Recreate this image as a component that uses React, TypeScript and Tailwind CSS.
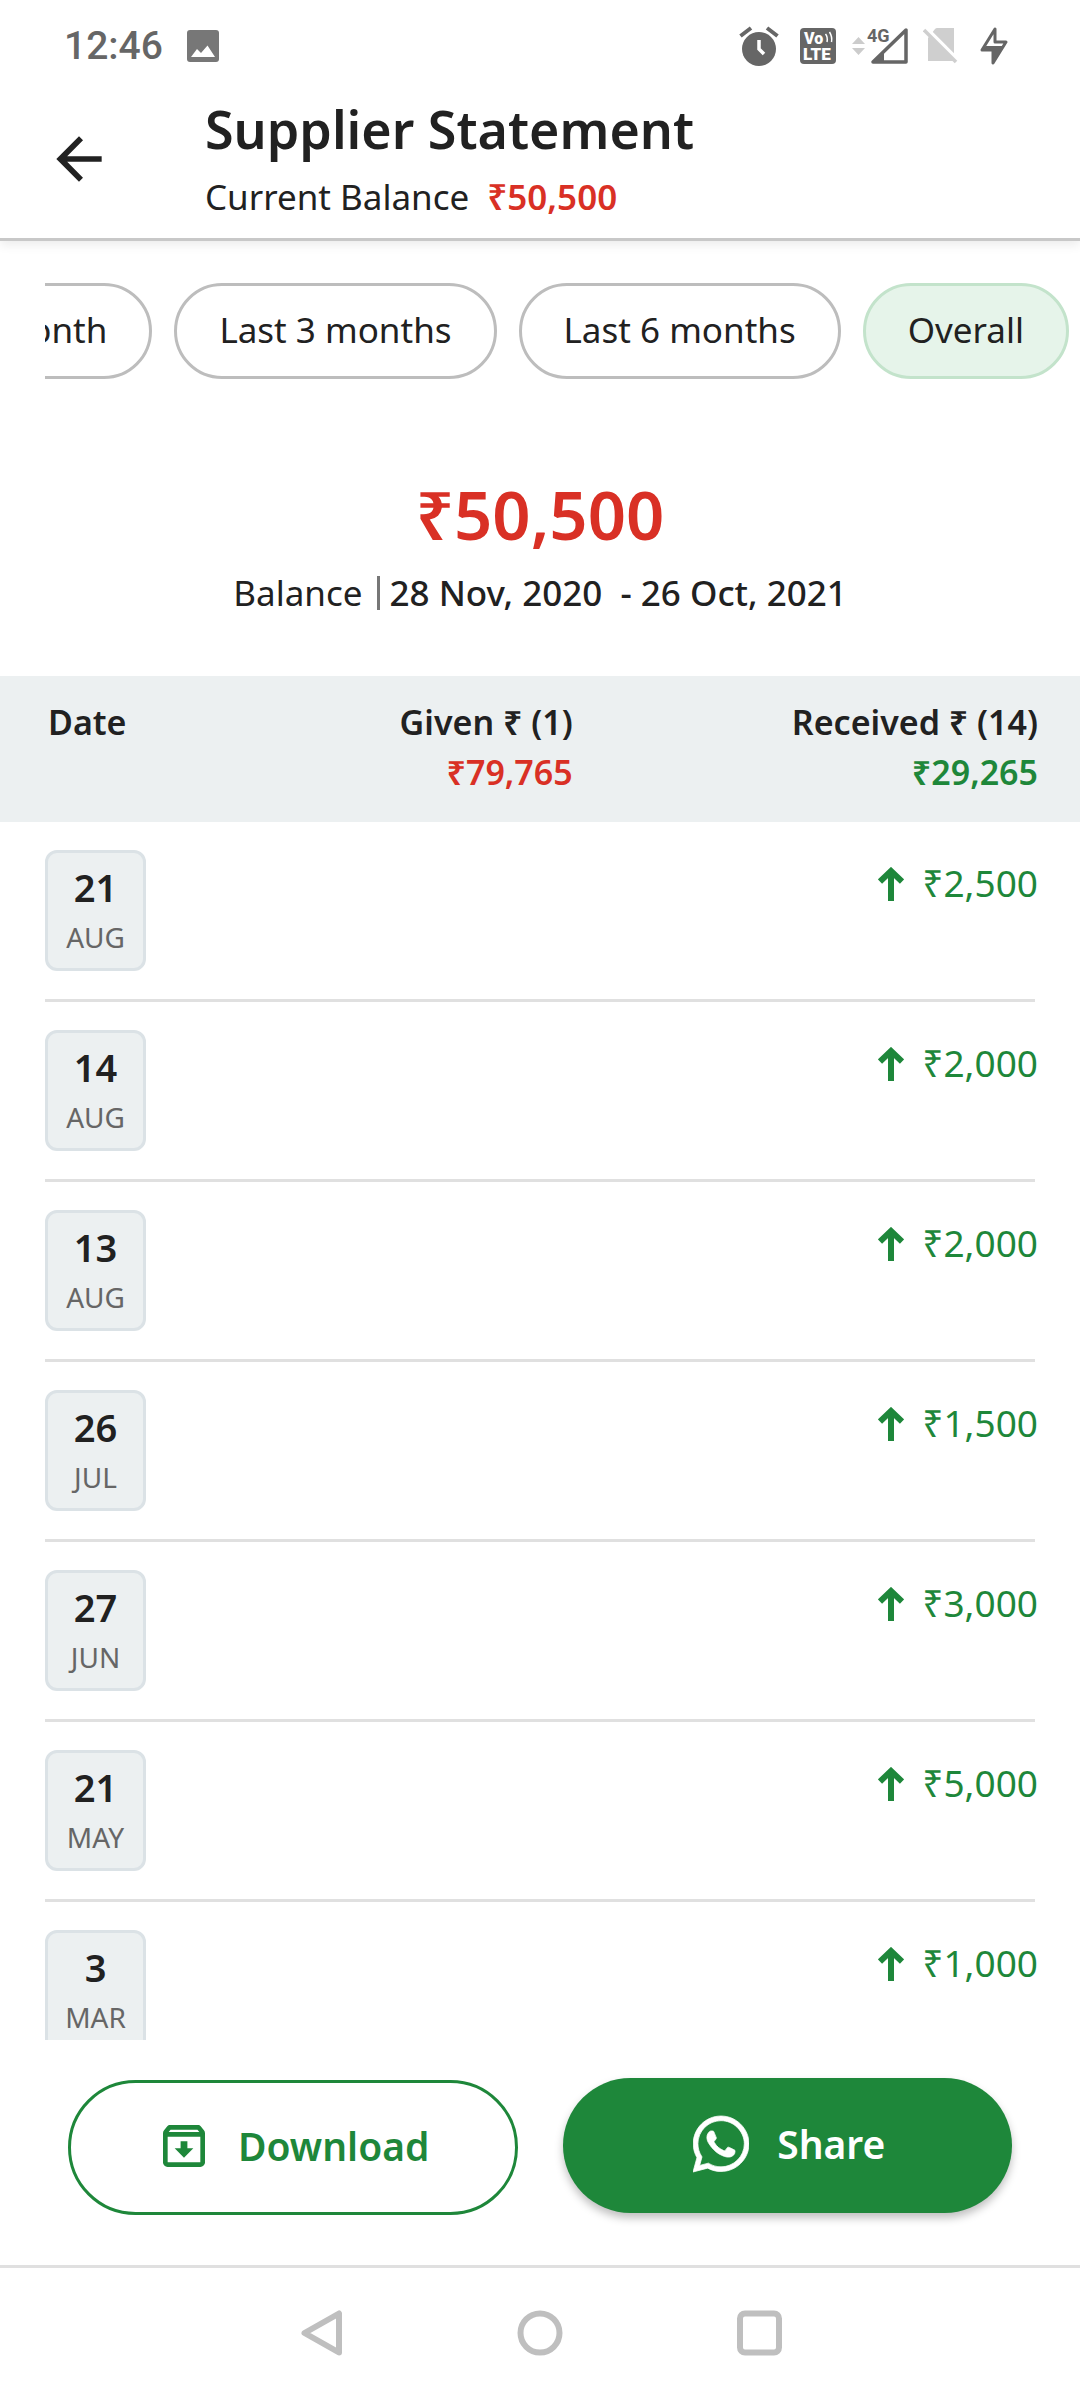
import { useState } from "react"
import { FaWhatsapp } from "react-icons/fa"
import { MdArrowBack, MdOutlineArchive } from "react-icons/md"

type Entry = {
  day: string
  month: string
  received: string
}

const entries: Entry[] = [
  { day: "21", month: "AUG", received: "₹2,500" },
  { day: "14", month: "AUG", received: "₹2,000" },
  { day: "13", month: "AUG", received: "₹2,000" },
  { day: "26", month: "JUL", received: "₹1,500" },
  { day: "27", month: "JUN", received: "₹3,000" },
  { day: "21", month: "MAY", received: "₹5,000" },
  { day: "3", month: "MAR", received: "₹1,000" },
]

const ranges = ["Last month", "Last 3 months", "Last 6 months", "Overall"]

function StatusBar() {
  return (
    <div className="flex items-center justify-between h-[92px] pl-[64px] pr-[72px] text-[#666]">
      <div className="flex items-center gap-6">
        <span className="font-['Roboto',sans-serif] font-medium text-[39px] leading-[48px]">12:46</span>
        <svg className="w-8 h-8" viewBox="0 0 32 32" aria-hidden="true">
          <rect width="32" height="32" rx="3" fill="#777" />
          <path d="M4 27l6-8 4 4 6.500-7.500L28 27z" fill="#fff" />
        </svg>
      </div>
      <div className="flex items-center">
        <svg className="w-10 h-10" viewBox="0 0 40 40" aria-hidden="true">
          <circle cx="20" cy="23" r="17" fill="currentColor" />
          <path d="M1.500 10L12 2M38.500 10L28 2" stroke="currentColor" strokeWidth="4" />
          <path d="M20 14v9l5 5" fill="none" stroke="#fff" strokeWidth="3.500" />
        </svg>
        <svg className="w-9 h-9 ml-[21px]" viewBox="0 0 36 36" aria-hidden="true">
          <rect width="36" height="36" rx="4" fill="currentColor" />
          <g fill="#fff" fontFamily="Roboto, sans-serif" fontWeight="900">
            <text x="4" y="16" fontSize="16">Vo</text>
            <text x="3" y="32" fontSize="17">LTE</text>
          </g>
          <path d="M25.500 6q2.500 3 1.500 8M29.500 4q3 5 2 10" fill="none" stroke="#fff" strokeWidth="1.500" />
        </svg>
        <svg className="w-14 h-10 ml-4 overflow-visible" viewBox="0 0 56 40" aria-hidden="true">
          <path d="M0 18l6.500-7 6.500 7zM0 22l6.500 7 6.500-7z" fill="#ccc" />
          <text x="15" y="16" fontSize="18" fontWeight="700" fontFamily="Roboto, sans-serif" fill="currentColor">4G</text>
          <path d="M54 4v32H21z" fill="none" stroke="currentColor" strokeWidth="3.500" strokeLinejoin="round" />
          <path d="M32 25v11H20z" fill="currentColor" />
        </svg>
        <svg className="w-9 h-9 ml-[15px]" viewBox="0 0 36 36" aria-hidden="true">
          <path d="M5 10l7-9q1-1 2-1h17v33H5z" fill="#cfcfcf" />
          <path d="M3 0l33 33" stroke="#fff" strokeWidth="4" />
          <path d="M1 2l32 32" stroke="#cfcfcf" strokeWidth="3.500" />
        </svg>
        <svg className="w-7 h-10 ml-[21px]" viewBox="0 0 28 40" aria-hidden="true">
          <path d="M15 3v13h11L13 37V24H2z" fill="none" stroke="currentColor" strokeWidth="3" strokeLinejoin="round" />
          <path d="M6 20h18L13 37V24H2z" fill="currentColor" />
        </svg>
      </div>
    </div>
  )
}

function NavBar() {
  return (
    <nav className="flex shrink-0 justify-center gap-[174px] h-[135px] pt-[41px] border-t-[3px] border-[#e0e0e0] text-[#bfbfbf]">
      <button type="button" aria-label="Back" className="w-[46px] h-[48px]">
        <svg className="w-[46px] h-[48px]" viewBox="0 0 46 48" fill="none" stroke="currentColor" strokeWidth="6" strokeLinejoin="round" aria-hidden="true">
          <path d="M42 4.500v39L7.500 24z" />
        </svg>
      </button>
      <button type="button" aria-label="Home" className="w-[46px] h-[48px]">
        <svg className="w-[46px] h-[48px]" viewBox="0 0 46 48" fill="none" stroke="currentColor" strokeWidth="6" aria-hidden="true">
          <circle cx="23" cy="24" r="19.500" />
        </svg>
      </button>
      <button type="button" aria-label="Recent apps" className="w-[46px] h-[48px]">
        <svg className="w-[46px] h-[48px]" viewBox="0 0 46 48" fill="none" stroke="currentColor" strokeWidth="6" aria-hidden="true">
          <rect x="3" y="4.500" width="39" height="39" rx="5" />
        </svg>
      </button>
    </nav>
  )
}

function EntryRow({ entry }: { entry: Entry }) {
  return (
    <tr className="flex items-start justify-between mx-[45px] py-7 border-b-[3px] border-[#e0e0e0]">
      <td className="w-[101px] h-[121px] pt-[9px] rounded-xl border-[3px] border-[#dbe2e6] bg-[#ecf0f1] text-center">
        <div className="text-[38px] leading-[50px] font-semibold">{entry.day}</div>
        <div className="text-[28px] leading-[50px] text-[#666]">{entry.month}</div>
      </td>
      <td className="flex items-center gap-[18px] pt-2 -mr-[3px] text-[37px] leading-[50px] text-[#1e873a]">
        <svg className="w-[26px] h-[34px] mt-[2px]" viewBox="0 0 26 34" fill="none" stroke="currentColor" strokeWidth="6" aria-hidden="true">
          <path d="M13 4v30M2 14.500L13 4l11 10.500" />
        </svg>
        {entry.received}
      </td>
    </tr>
  )
}

export default function App() {
  const [range, setRange] = useState("Overall")

  return (
    <div className="flex flex-col h-dvh bg-white text-[#212121] font-['Noto_Sans',sans-serif]">
      <header className="shrink-0 border-b-[3px] border-[#c8c8c8] shadow-[0_4px_10px_rgba(0,0,0,0.08)]">
        <StatusBar />
        <div className="flex items-center gap-[92px] h-[146px] pl-[45px]">
          <button type="button" aria-label="Go back" className="mt-[-12px]">
            <MdArrowBack className="size-[68px]" />
          </button>
          <div className="pb-3">
            <h1 className="text-[52px] leading-[76px] font-semibold">Supplier Statement</h1>
            <p className="flex gap-[18px] text-[35px] leading-[60px]">
              Current Balance <strong className="font-semibold text-[#d93025]">₹50,500</strong>
            </p>
          </div>
        </div>
      </header>

      <div className="flex shrink-0 justify-end gap-[22px] mt-[42px] ml-[45px] mr-[11px] overflow-hidden">
        {ranges.map((r) => (
          <button
            key={r}
            type="button"
            aria-pressed={r === range}
            onClick={() => setRange(r)}
            className={`shrink-0 h-[96px] px-[42px] pb-[2px] rounded-full border-[3px] text-[35px] leading-[48px] ${
              r === range ? "border-[#c3e3cb] bg-[#e6f4ea]" : "border-[#bdbdbd]"
            }`}
          >
            {r}
          </button>
        ))}
      </div>

      <section className="shrink-0 h-[297px] pt-[88px] text-center">
        <p className="text-[67px] leading-[94px] font-semibold text-[#d93025]">₹50,500</p>
        <p className="flex items-center justify-center gap-[10px] pt-2 text-[35px] leading-[48px]">
          Balance
          <span className="w-[3px] h-[34px] ml-1 bg-[#777]" />
          <strong className="font-medium whitespace-pre">28 Nov, 2020  - 26 Oct, 2021</strong>
        </p>
      </section>

      <table className="flex flex-col flex-1 min-h-0">
        <thead className="block shrink-0 bg-[#ecf0f1]">
          <tr className="flex h-[146px] pt-[21px] pl-[48px] pr-[42px] text-[34px] leading-[50px]">
            <th scope="col" className="w-[20%] text-left font-semibold">Date</th>
            <th scope="col" className="w-[33%] text-right font-semibold">
              Given ₹ (1)
              <div className="text-[#d93025]">₹79,765</div>
            </th>
            <th scope="col" className="flex-1 text-right font-semibold">
              Received ₹ (14)
              <div className="text-[#1e873a]">₹29,265</div>
            </th>
          </tr>
        </thead>
        <tbody className="block flex-1 min-h-0 overflow-y-auto [scrollbar-width:none]">
          {entries.map((entry) => (
            <EntryRow key={`${entry.day}-${entry.month}`} entry={entry} />
          ))}
        </tbody>
      </table>

      <div className="grid grid-cols-2 shrink-0 items-start gap-[45px] h-[225px] pt-[38px] px-[68px] text-[39px] leading-[56px] font-semibold">
        <button
          type="button"
          className="flex items-center justify-center gap-[26px] h-[135px] mt-[2px] pb-1 rounded-full border-[3px] border-[#1e873a] text-[#1e873a]"
        >
          <MdOutlineArchive className="size-14" />
          Download
        </button>
        <button
          type="button"
          className="flex items-center justify-center gap-7 h-[135px] pb-1 pl-1 rounded-full bg-[#1e873a] text-white shadow-[0_5px_8px_rgba(0,0,0,0.25)]"
        >
          <FaWhatsapp className="w-14 h-16" stroke="currentColor" strokeWidth="6" />
          Share
        </button>
      </div>

      <NavBar />
    </div>
  )
}
